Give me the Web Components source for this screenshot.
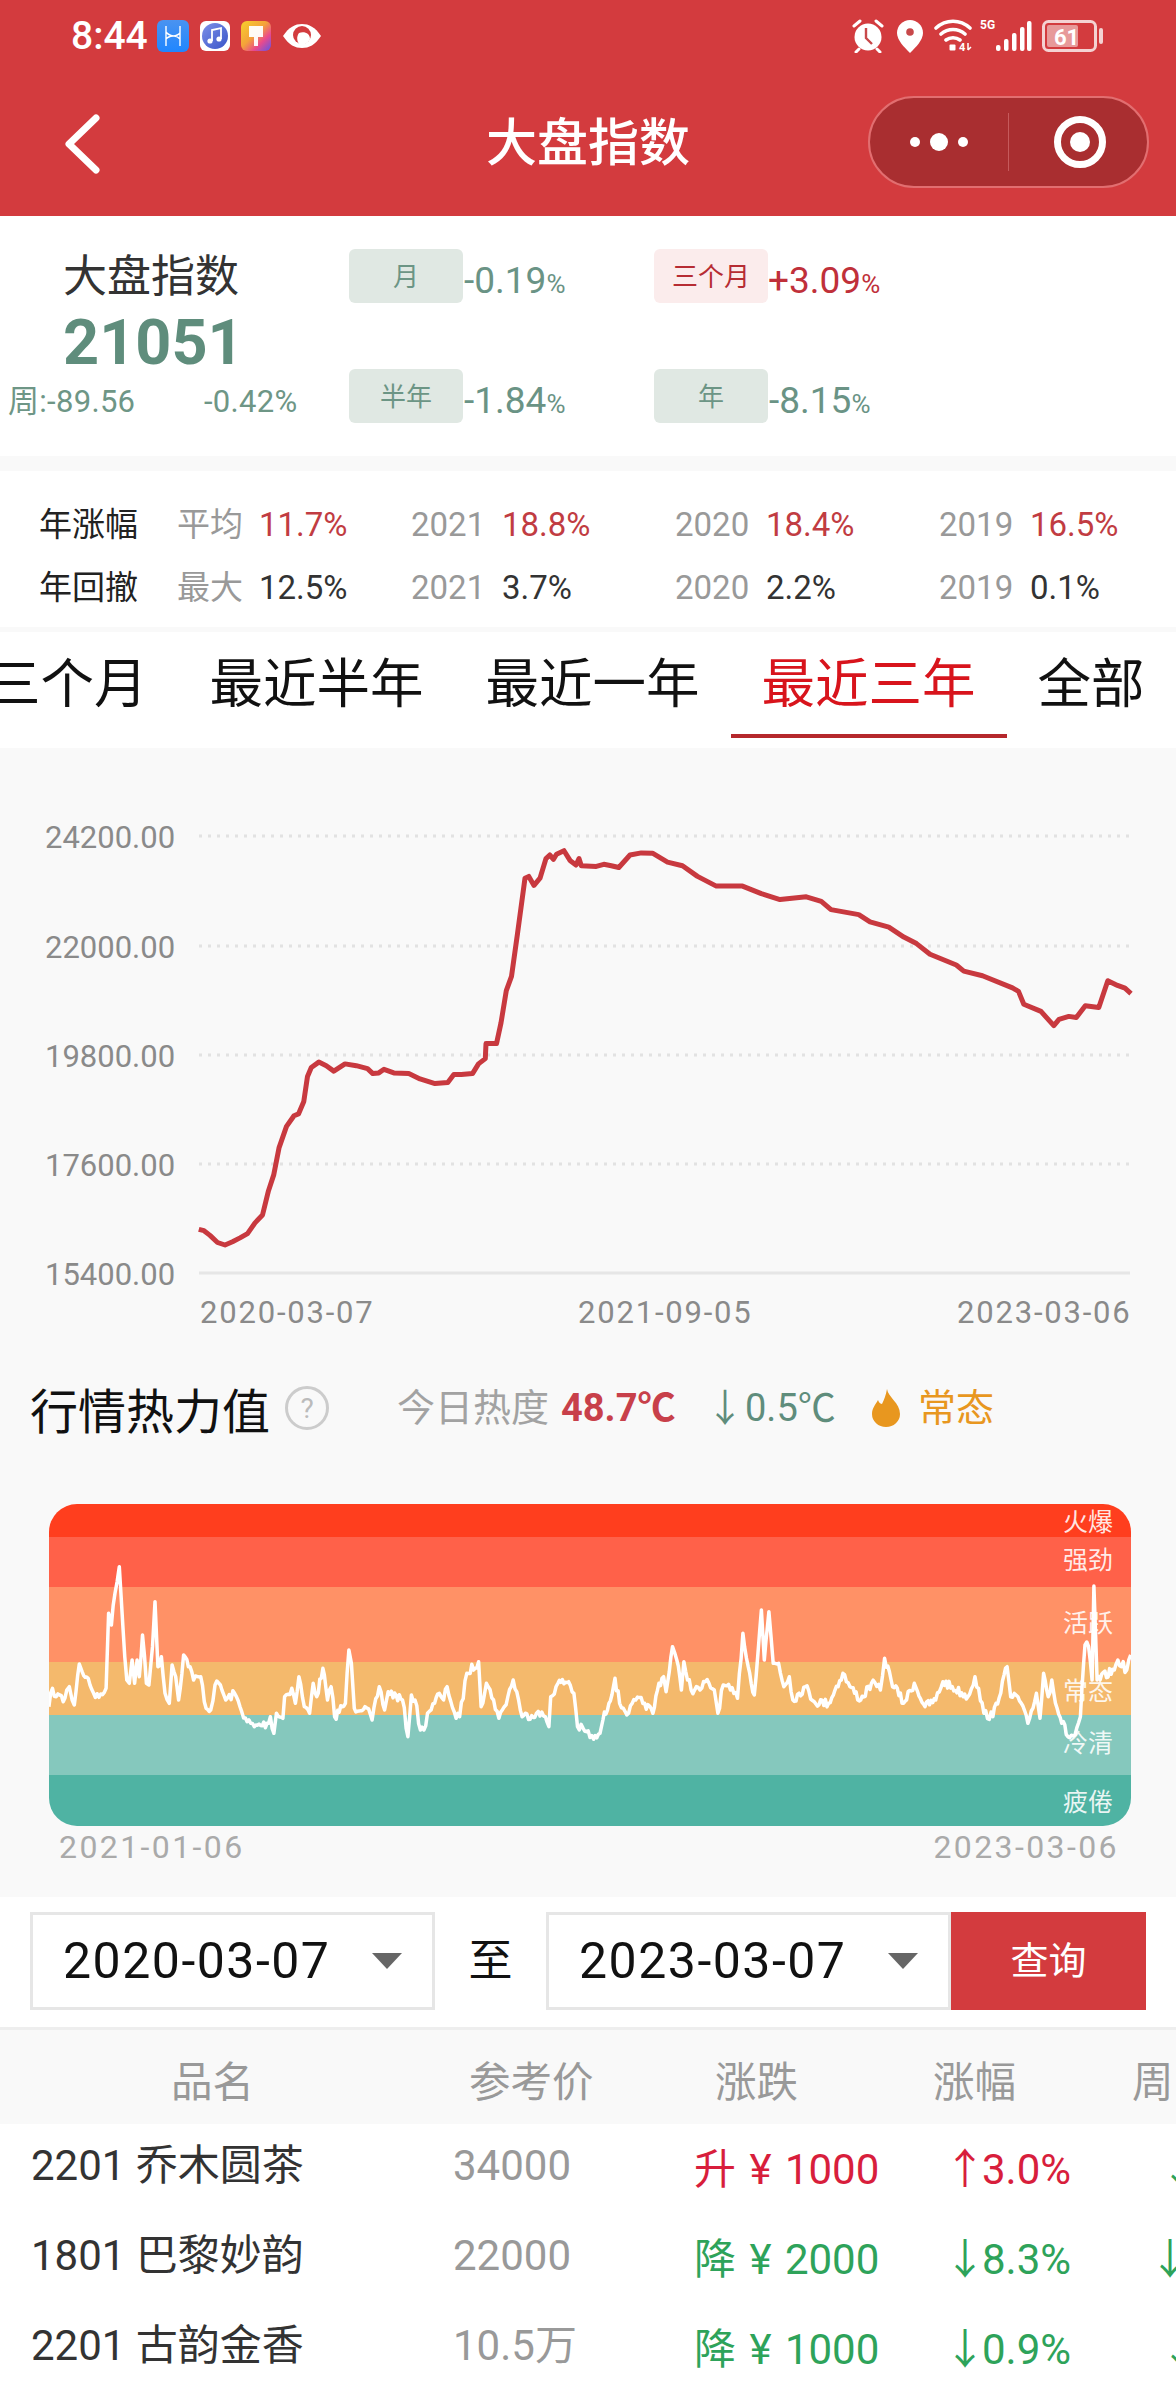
<!DOCTYPE html>
<html lang="zh">
<head>
<meta charset="utf-8">
<title>大盘指数</title>
<style>
    html, body { margin: 0; padding: 0; }
    body {
        width: 1176px;
        height: 2400px;
        overflow: hidden;
        background: #f9f9f9;
        font-family: Roboto, "Noto Sans CJK SC", sans-serif;
    }
</style>
</head>
<body>
<status-bar></status-bar>
<nav-bar>大盘指数</nav-bar>
<index-summary></index-summary>
<yearly-stats></yearly-stats>
<period-tabs></period-tabs>
<trend-chart></trend-chart>
<heat-panel></heat-panel>
<date-filter></date-filter>
<quote-table></quote-table>

<script>
class StatusBar extends HTMLElement {
    constructor(){
        super();
        this.attachShadow({mode: 'open'});
        this.shadowRoot.innerHTML = `
            <style>
                :host { display: flex; align-items: center; height: 72px; background: #d33b3e; color: #fff; padding: 0 73px 0 71px; box-sizing: border-box; }
                #time { font-size: 39px; font-weight: 500; width: 86px; line-height: 72px; }
                #left, #right { display: flex; align-items: center; }
                #left svg { margin-right: 11px; display: block; }
                #right { margin-left: auto; }
                #right svg { display: block; }
                #g5 { font-size: 12px; font-weight: 700; align-self: flex-start; margin-top: 0; width: 16px; line-height: 13px; }
            </style>
            <div id="left">
                <span id="time">8:44</span>
                <svg width="32" height="32" viewBox="0 0 32 32">
                    <defs><linearGradient id="hb" x1="0" y1="0" x2="0" y2="1"><stop offset="0" stop-color="#4a93f0"/><stop offset="1" stop-color="#1f86ff"/></linearGradient></defs>
                    <rect width="32" height="32" rx="6" fill="url(#hb)"/>
                    <path d="M9 6v20M23 6v20M9 12c4 6 10 2 14 7M9 19c4-5 10-1 14-6" stroke="#fff" stroke-width="1.4" fill="none"/>
                </svg>
                <svg width="30" height="30" viewBox="0 0 30 30">
                    <defs><linearGradient id="mb" x1="0" y1="0" x2="1" y2="1"><stop offset="0" stop-color="#7d8fe8"/><stop offset="1" stop-color="#3a55c8"/></linearGradient></defs>
                    <rect width="30" height="30" rx="6" fill="#fff"/>
                    <circle cx="15" cy="15" r="13" fill="url(#mb)"/>
                    <path d="M12 20V9l9-2v11" stroke="#fff" stroke-width="1.8" fill="none"/>
                    <circle cx="10" cy="20" r="2.6" fill="#fff"/><circle cx="19" cy="18" r="2.6" fill="#fff"/>
                </svg>
                <svg width="30" height="30" viewBox="0 0 30 30">
                    <defs><linearGradient id="rb" x1="0" y1="0" x2="1" y2="1"><stop offset="0" stop-color="#f7d02c"/><stop offset=".45" stop-color="#f4a23a"/><stop offset=".7" stop-color="#ea4a8c"/><stop offset="1" stop-color="#5d55e8"/></linearGradient></defs>
                    <rect width="30" height="30" rx="6" fill="url(#rb)"/>
                    <path d="M8 5h14v11h-5v9h-4v-9H8z" fill="#fff" opacity=".95"/>
                </svg>
                <svg width="40" height="26" viewBox="0 0 40 26" style="margin-left:0">
                    <path d="M1 13C7 4 13 1 20 1s13 3 19 12c-6 9-12 12-19 12S7 22 1 13z" fill="#fff"/>
                    <circle cx="20" cy="12" r="9" fill="#d33b3e"/>
                    <path d="M17 10c6-2 11 1 11 6-2 4-6 6-10 6-3-3-4-8-1-12z" fill="#fff"/>
                </svg>
            </div>
            <div id="right">
                <svg width="34" height="34" viewBox="0 0 34 34" style="margin-right:12px">
                    <circle cx="17" cy="18" r="13.500" fill="#fff"/>
                    <path d="M3 7l6-5M31 7l-6-5M8 30l-3 3M26 30l3 3" stroke="#fff" stroke-width="3" stroke-linecap="round"/>
                    <path d="M15 9v10l6 6" stroke="#c8484a" stroke-width="2.4" fill="none"/>
                </svg>
                <svg width="26" height="33" viewBox="0 0 26 33" style="margin-right:11px">
                    <path d="M13 0C6 0 0 5.500 0 13c0 7 7 14 13 20 6-6 13-13 13-20C26 5.500 20 0 13 0z" fill="#fff"/>
                    <circle cx="13" cy="12" r="3.800" fill="#c8484a"/>
                </svg>
                <svg width="40" height="34" viewBox="0 0 40 34" style="margin-right:6px">
                    <path d="M2 9c10-9 24-9 34 0M7 15c7-6 17-6 24 0M12 21c4-3 10-3 14 0" stroke="#fff" stroke-width="3.600" fill="none" stroke-linecap="round"/>
                    <rect x="15.500" y="25.500" width="6" height="6" fill="#fff" rx="1"/>
                    <text x="25" y="32" font-size="11" font-weight="700" fill="#fff">4</text>
                    <path d="M34 24v7M34 31l3-3" stroke="#fff" stroke-width="1.500"/>
                </svg>
                <span id="g5">5G</span>
                <svg width="36" height="32" viewBox="0 0 36 32" style="margin-right:10px">
                    <g fill="#fff">
                        <rect x="0" y="25" width="4.500" height="6" rx="2"/>
                        <rect x="8" y="19" width="4.500" height="12" rx="2"/>
                        <rect x="16" y="13" width="4.500" height="18" rx="2"/>
                        <rect x="24" y="7" width="4.500" height="24" rx="2"/>
                        <rect x="31" y="1" width="4.500" height="30" rx="2"/>
                    </g>
                </svg>
                <svg width="61" height="32" viewBox="0 0 61 32">
                    <rect x="1.500" y="1.500" width="52" height="29" rx="5" fill="none" stroke="#f4d2d2" stroke-width="3"/>
                    <rect x="5" y="5" width="31" height="22" rx="2" fill="#e79a9a"/>
                    <text x="12" y="25" font-size="22" font-weight="700" fill="#fff" font-family="Roboto">61</text>
                    <rect x="57" y="8" width="4" height="16" rx="2" fill="#f4d2d2"/>
                </svg>
            </div>
        `;
    }
}

class NavBar extends HTMLElement {
    constructor(){
        super();
        this.attachShadow({mode: 'open'});
        this.shadowRoot.innerHTML = `
            <style>
                :host { display: grid; grid-template-columns: 1fr auto 1fr; align-items: center; height: 144px; background: #d33b3e; color: #fff; box-sizing: border-box; }
                #back { padding-left: 63px; display: flex; }
                #title { font-size: 51px; line-height: 60px; font-weight: 500; }
                #capsule {
                    justify-self: end;
                    margin-right: 27px;
                    margin-bottom: 4px;
                    width: 281px;
                    height: 92px;
                    box-sizing: border-box;
                    border: 2px solid #e26e70;
                    border-radius: 46px;
                    background: #a92e30;
                    display: flex;
                    align-items: center;
                }
                #more { width: 138px; display: flex; align-items: center; justify-content: center; gap: 10px; box-sizing: border-box; }
                .dot { background: #fff; border-radius: 50%; width: 10px; height: 10px; }
                .dot.big { width: 18px; height: 18px; }
                #line { width: 1px; height: 58px; background: #c65a5c; }
                #target { flex: 1; display: flex; justify-content: center; padding-left: 3px; }
            </style>
            <div id="back">
                <svg width="38" height="60" viewBox="0 0 38 60"><path d="M33 4L6 30l27 26" fill="none" stroke="#fff" stroke-width="7" stroke-linecap="round" stroke-linejoin="round"/></svg>
            </div>
            <div id="title"><slot></slot></div>
            <div id="capsule">
                <div id="more"><span class="dot"></span><span class="dot big"></span><span class="dot"></span></div>
                <div id="line"></div>
                <div id="target">
                    <svg width="54" height="54" viewBox="0 0 54 54"><circle cx="27" cy="27" r="22.500" fill="none" stroke="#fff" stroke-width="7"/><circle cx="27" cy="27" r="10" fill="#fff"/></svg>
                </div>
            </div>
        `;
    }
}

class ChangeTag extends HTMLElement {
    constructor(){
        super();
        this.attachShadow({mode: 'open'});
        const up = this.hasAttribute('up');
        this.shadowRoot.innerHTML = `
            <style>
                :host { display: flex; align-items: center; }
                #tag {
                    width: 114px; height: 54px; border-radius: 6px;
                    background: ${up ? '#fbecec' : '#e0e8e3'};
                    color: ${up ? '#b62c33' : '#6c9585'};
                    font-size: 26px;
                    box-sizing: border-box;
                    padding-bottom: 4px;
                    display: flex; align-items: center; justify-content: center;
                }
                #val { margin-left: ${up ? 0 : 1}px; padding-top: 8px; font-size: 37px; color: ${up ? '#c0303a' : '#6a9385'}; }
                small { font-size: 26px; }
            </style>
            <div id="tag"><slot></slot></div>
            <div id="val">${this.getAttribute('value')}<small>%</small></div>
        `;
    }
}

class IndexSummary extends HTMLElement {
    constructor(){
        super();
        this.attachShadow({mode: 'open'});
        this.shadowRoot.innerHTML = `
            <style>
                :host { display: flex; height: 240px; background: #fff; box-sizing: border-box; margin-bottom: 15px; }
                #left { width: 349px; padding-top: 36px; box-sizing: border-box; }
                #name { padding-left: 63px; font-size: 44px; line-height: 50px; color: #333; }
                #num { padding-left: 63px; font-size: 63px; line-height: 82px; font-weight: 700; color: #5f8d7c; }
                #week { display: flex; padding-left: 8px; font-size: 31px; line-height: 36px; color: #6e9686; letter-spacing: .3px; }
                #week span:first-child { width: 196px; }
                #grid { display: grid; grid-template-columns: 305px 305px; grid-template-rows: 54px 54px; row-gap: 66px; padding-top: 33px; }
            </style>
            <div id="left">
                <div id="name">大盘指数</div>
                <div id="num">21051</div>
                <div id="week"><span>周:-89.56</span><span>-0.42%</span></div>
            </div>
            <div id="grid">
                <change-tag value="-0.19">月</change-tag>
                <change-tag value="+3.09" up>三个月</change-tag>
                <change-tag value="-1.84">半年</change-tag>
                <change-tag value="-8.15">年</change-tag>
            </div>
        `;
    }
}

class YearlyStats extends HTMLElement {
    constructor(){
        super();
        this.attachShadow({mode: 'open'});
        const row = (title, vals, cls) => `
            <div class="row">
                <div class="title">${title}</div>
                ${vals.map((v, i) => `<div class="cell"><span class="k${i ? '' : ' first'}">${v[0]}</span><span class="${cls}">${v[1]}</span></div>`).join('')}
            </div>`;
        this.shadowRoot.innerHTML = `
            <style>
                :host { display: block; background: #fff; padding: 22px 0 9px; height: 156px; box-sizing: border-box; margin-bottom: 5px; font-size: 33px; }
                .row { display: grid; grid-template-columns: 177px 234px 264px 264px 1fr; height: 63px; align-items: center; line-height: 44px; }
                .title { padding-left: 39px; color: #222; }
                .cell { display: flex; align-items: center; height: 44px; }
                .cell span { display: block; line-height: 44px; height: 44px; }
                .k { width: 91px; color: #999; }
                .k.first { width: 82px; }
                .red { color: #c13c42; }
                .dark { color: #333; }
            </style>
            ${row('年涨幅', [['平均', '11.7%'], ['2021', '18.8%'], ['2020', '18.4%'], ['2019', '16.5%']], 'red')}
            ${row('年回撤', [['最大', '12.5%'], ['2021', '3.7%'], ['2020', '2.2%'], ['2019', '0.1%']], 'dark')}
        `;
    }
}

class PeriodTabs extends HTMLElement {
    constructor(){
        super();
        this.attachShadow({mode: 'open'});
        const tabs = ['三个月', '最近半年', '最近一年', '最近三年', '全部'];
        this.shadowRoot.innerHTML = `
            <style>
                :host { display: flex; height: 116px; background: #fff; overflow: hidden; font-size: 53.500px; color: #111; }
                .tab { flex: none; padding: 0 31px; height: 102px; line-height: 106px; white-space: nowrap; box-sizing: content-box; }
                .tab:first-of-type { margin-left: -44px; }
                .tab.on { color: #d8141c; border-bottom: 4px solid #b5282c; }
            </style>
            ${tabs.map(t => `<div class="tab${t === '最近三年' ? ' on' : ''}">${t}</div>`).join('')}
        `;
    }
}

class TrendChart extends HTMLElement {
    constructor(){
        super();
        this.attachShadow({mode: 'open'});
        // points read off the reference, in crop coordinates
        const pts = [[265,1258],[272,1262],[280,1275],[290,1295],[300,1302],[310,1293],[320,1282],[330,1270],[340,1240],[350,1218],[358,1150],[365,1105],[372,1030],[382,970],[392,940],[398,935],[405,900],[410,830],[415,805],[425,790],[435,800],[445,815],[460,795],[475,800],[490,808],[497,822],[505,820],[512,810],[525,820],[545,822],[560,837],[580,850],[597,847],[605,825],[615,825],[630,822],[638,795],[647,780],[648,738],[662,738],[668,680],[675,590],[682,550],[690,430],[700,275],[705,270],[712,295],[720,275],[728,220],[733,210],[738,222],[742,208],[752,198],[760,225],[768,238],[772,220],[775,240],[795,242],[805,236],[815,240],[825,245],[840,210],[855,204],[870,205],[890,230],[910,240],[930,270],[955,297],[990,297],[1015,318],[1040,335],[1075,327],[1095,340],[1108,363],[1145,377],[1160,397],[1185,412],[1205,440],[1222,458],[1240,488],[1275,518],[1285,535],[1310,548],[1350,582],[1358,592],[1365,628],[1388,648],[1405,688],[1412,670],[1425,662],[1435,665],[1447,632],[1465,637],[1477,562],[1490,575],[1500,583],[1508,598]];
        const d = pts.map(p => (p[0] / 1.3333).toFixed(1) + ' ' + (32 + p[1] / 2.8).toFixed(1)).join(' L');
        const ys = [[88, '24200.00'], [198, '22000.00'], [307, '19800.00'], [416, '17600.00'], [525, '15400.00']];
        this.shadowRoot.innerHTML = `
            <style>
                :host { display: block; height: 620px; background: #f9f9f9; }
                svg { display: block; }
                text { font-size: 31px; fill: #8a8a8a; }
            </style>
            <svg width="1176" height="620" viewBox="0 0 1176 620">
                ${ys.slice(0, 4).map(y => `<line x1="199" x2="1130" y1="${y[0]}" y2="${y[0]}" stroke="#e2e2e2" stroke-width="3" stroke-dasharray="3 6"/>`).join('')}
                <line x1="199" x2="1130" y1="525" y2="525" stroke="#e6e6e6" stroke-width="3"/>
                ${ys.map(y => `<text x="45" y="${y[0] + 12}">${y[1]}</text>`).join('')}
                <text x="200" y="575" letter-spacing="1.8">2020-03-07</text>
                <text x="578" y="575" letter-spacing="1.8">2021-09-05</text>
                <text x="957" y="575" letter-spacing="1.8">2023-03-06</text>
                <path d="M${d}" fill="none" stroke="#c8393f" stroke-width="5" stroke-linejoin="round"/>
            </svg>
        `;
    }
}

class HeatPanel extends HTMLElement {
    constructor(){
        super();
        this.attachShadow({mode: 'open'});
        const left = [[25,620],[35,565],[45,590],[55,585],[65,605],[75,570],[82,560],[90,600],[96,615],[110,492],[118,515],[135,535],[150,580],[165,592],[185,565],[192,340],[200,375],[210,280],[222,200],[232,380],[243,540],[250,550],[258,480],[265,550],[272,480],[278,530],[287,405],[298,550],[305,555],[315,440],[322,305],[330,500],[340,470],[350,580],[362,610],[370,495],[380,530],[388,600],[402,465],[420,500],[430,540],[450,530],[465,625],[478,630],[490,555],[505,555],[520,600],[545,580],[560,620],[580,665],[600,680],[640,670],[645,650],[655,700],[662,640],[680,655],[685,590],[705,565],[715,610],[725,530],[740,620],[755,640],[765,550],[775,590],[792,505],[805,600],[815,560],[825,650],[855,610],[865,450],[872,490],[880,625],[910,620],[930,660],[950,560],[965,630],[975,575],[1015,600],[1030,710],[1040,585],[1050,600],[1065,690],[1075,690],[1085,640],[1105,610],[1118,580],[1130,600],[1140,560],[1165,655],[1175,650],[1195,520],[1228,485],[1235,620],[1250,550],[1270,600],[1285,655],[1300,620],[1325,540],[1340,600],[1350,650],[1390,640],[1415,650],[1425,680],[1430,590],[1450,550],[1480,545],[1495,580],[1505,680],[1530,695],[1550,718]];
        const right = [[0,700],[8,660],[25,610],[42,535],[55,610],[80,640],[100,600],[125,610],[148,640],[165,550],[178,530],[185,575],[203,440],[215,480],[228,570],[235,485],[255,570],[280,570],[295,545],[320,570],[330,640],[345,555],[365,570],[385,595],[400,400],[415,500],[432,585],[452,330],[460,480],[473,335],[485,490],[500,490],[515,560],[530,530],[540,600],[575,560],[600,605],[640,610],[680,520],[700,560],[730,600],[760,550],[785,570],[797,475],[815,540],[850,610],[880,550],[910,620],[940,600],[960,545],[1030,590],[1050,530],[1075,640],[1100,650],[1140,500],[1150,590],[1170,590],[1198,670],[1222,580],[1232,655],[1242,520],[1255,590],[1265,540],[1280,625],[1310,710],[1330,705],[1345,650],[1358,435],[1368,440],[1378,540],[1383,258],[1392,540],[1440,510],[1450,480],[1475,510],[1486,465]];
        const line = left.map(p => [p[0] / 2.8 - 9, p[1] / 3 - 4]).concat(right.map(p => [551 + p[0] / 2.8, p[1] / 3 - 4]));
        // small wobble between the read points, the real series is much denser
        let seed = 7;
        const rnd = () => { seed = (seed * 16807) % 2147483647; return seed / 2147483647 - 0.5; };
        const dense = [];
        line.forEach((p, i) => {
            dense.push(p);
            const n = line[i + 1];
            if (!n) return;
            const steps = Math.floor((n[0] - p[0]) / 1.5);
            for (let s = 1; s < steps; s++) {
                const t = s / steps;
                dense.push([p[0] + (n[0] - p[0]) * t, p[1] + (n[1] - p[1]) * t + rnd() * 9]);
            }
        });
        const d = dense.map(p => p[0].toFixed(1) + ' ' + p[1].toFixed(1)).join(' L');
        const bands = [['火爆', 33, '#ff3e1e', 2], ['强劲', 50, '#ff6149', 8], ['活跃', 75, '#ff9166', 8], ['常态', 53, '#f4b96c', 0], ['冷清', 60, '#85c8bd', 8], ['疲倦', 51, '#4fb3a3', 2]];
        this.shadowRoot.innerHTML = `
            <style>
                :host { display: block; height: 529px; background: #f9f9f9; }
                #head { display: flex; align-items: center; height: 80px; padding-left: 30px; box-sizing: border-box; }
                #title { font-size: 48px; color: #111; width: 255px; }
                #help { width: 44px; height: 44px; box-sizing: border-box; border: 3px solid #ccc; border-radius: 50%; color: #bbb; font-size: 28px; display: flex; align-items: center; justify-content: center; margin-right: 68px; }
                #today { font-size: 38px; line-height: 50px; color: #a2a2a2; width: 164px; white-space: nowrap; }
                #deg { font-size: 38px; line-height: 50px; font-weight: 700; color: #c8404a; width: 145px; white-space: nowrap; }
                #arrow { font-size: 38px; line-height: 50px; color: #5f8d7c; width: 39px; }
                #diff { font-size: 38px; line-height: 50px; color: #5f8d7c; width: 125px; white-space: nowrap; }
                #state { font-size: 38px; line-height: 50px; color: #e8971f; margin-left: 16px; }
                #bands { position: relative; margin: 56px 45px 0 49px; height: 322px; border-radius: 28px; overflow: hidden; display: flex; flex-direction: column; }
                .band { display: flex; align-items: center; justify-content: flex-end; padding-right: 18px; box-sizing: border-box; color: rgba(255,255,255,.88); font-size: 25px; }
                svg.line { position: absolute; left: 0; top: 0; }
                #dates { display: flex; justify-content: space-between; padding: 0 57px 0 59px; height: 42px; line-height: 42px; font-size: 32px; color: #aaa; letter-spacing: 2.4px; }
            </style>
            <div id="head">
                <div id="title">行情热力值</div>
                <div id="help">?</div>
                <div id="today">今日热度</div>
                <div id="deg">48.7℃</div>
                <div id="arrow">↓</div>
                <div id="diff">0.5℃</div>
                <svg width="32" height="38" viewBox="0 0 32 38"><path d="M17 0c1 8 13 14 13 25a14 13 0 0 1-28 0c0-6 4-10 6-14 1 3 3 4 4 4 2-4 4-9 5-15z" fill="#e8971f"/></svg>
                <div id="state">常态</div>
            </div>
            <div id="bands">
                ${bands.map(b => `<div class="band" style="height:${b[1]}px;background:${b[2]};padding-bottom:${b[3]}px">${b[0]}</div>`).join('')}
                <svg class="line" width="1082" height="322" viewBox="0 0 1082 322"><path d="M${d}" fill="none" stroke="#fff" stroke-width="3.500" stroke-linejoin="round"/></svg>
            </div>
            <div id="dates"><span>2021-01-06</span><span>2023-03-06</span></div>
        `;
    }
}

class DateFilter extends HTMLElement {
    constructor(){
        super();
        this.attachShadow({mode: 'open'});
        const box = t => `<div class="box"><span>${t}</span><i></i></div>`;
        this.shadowRoot.innerHTML = `
            <style>
                :host { display: flex; height: 133px; box-sizing: border-box; padding: 15px 30px 17px; background: #fff; border-bottom: 3px solid #eee; }
                .box { width: 405px; height: 98px; box-sizing: border-box; border: 3px solid #e6e6e6; display: flex; align-items: center; padding-left: 30px; font-size: 50px; color: #111; letter-spacing: 1.500px; }
                .box span { width: 309px; }
                .box i { width: 0; height: 0; border-left: 15px solid transparent; border-right: 15px solid transparent; border-top: 16px solid #666; }
                #to { width: 111px; text-align: center; font-size: 44px; line-height: 98px; color: #111; }
                #go { width: 195px; height: 98px; background: #d33b3e; color: #fff; font-size: 38px; line-height: 98px; text-align: center; }
            </style>
            ${box('2020-03-07')}
            <div id="to">至</div>
            ${box('2023-03-07')}
            <div id="go">查询</div>
        `;
    }
}

class QuoteTable extends HTMLElement {
    constructor(){
        super();
        this.attachShadow({mode: 'open'});
        const data = [
            ['2201 乔木圆茶', '34000', '升', '1000', '↑', '3.0%', 'up', 11],
            ['1801 巴黎妙韵', '22000', '降', '2000', '↓', '8.3%', 'down', 0],
            ['2201 古韵金香', '10.5万', '降', '1000', '↓', '0.9%', 'down', 11]
        ];
        this.shadowRoot.innerHTML = `
            <style>
                :host { display: block; overflow: hidden; }
                #head { display: grid; grid-template-columns: 298px 246px 218px 199px 1fr; padding-left: 171px; height: 94px; line-height: 106px; background: #f9f9f9; font-size: 41.500px; color: #999; white-space: nowrap; overflow: hidden; }
                #body { background: #fff; height: 276px; }
                .row { display: grid; grid-template-columns: 422px 241px 250px 205px 50px; padding-left: 31px; height: 90px; padding-bottom: 4px; box-sizing: border-box; align-items: center; font-size: 42px; line-height: 56px; white-space: nowrap; }
                .name { color: #333; padding-bottom: 2px; }
                .price { color: #999; font-size: 42px; padding-bottom: 2px; }
                .up { color: #d81e3c; }
                .down { color: #2ea35a; }
                .shift { padding-top: 5px; }
                .chg { word-spacing: 3px; }
                .arrow { display: inline-block; width: 38px; }
            </style>
            <div id="head"><span>品名</span><span>参考价</span><span>涨跌</span><span>涨幅</span><span>周</span></div>
            <div id="body">
                ${data.map(r => `
                    <div class="row">
                        <span class="name">${r[0]}</span>
                        <span class="price">${r[1]}</span>
                        <span class="chg shift ${r[6]}">${r[2]} ¥ ${r[3]}</span>
                        <span class="shift ${r[6]}"><span class="arrow">${r[4]}</span>${r[5]}</span>
                        <span class="shift down" style="padding-left:${r[7]}px">↓</span>
                    </div>`).join('')}
            </div>
        `;
    }
}

customElements.define('change-tag', ChangeTag);
customElements.define('status-bar', StatusBar);
customElements.define('nav-bar', NavBar);
customElements.define('index-summary', IndexSummary);
customElements.define('yearly-stats', YearlyStats);
customElements.define('period-tabs', PeriodTabs);
customElements.define('trend-chart', TrendChart);
customElements.define('heat-panel', HeatPanel);
customElements.define('date-filter', DateFilter);
customElements.define('quote-table', QuoteTable);
</script>
</body>
</html>
